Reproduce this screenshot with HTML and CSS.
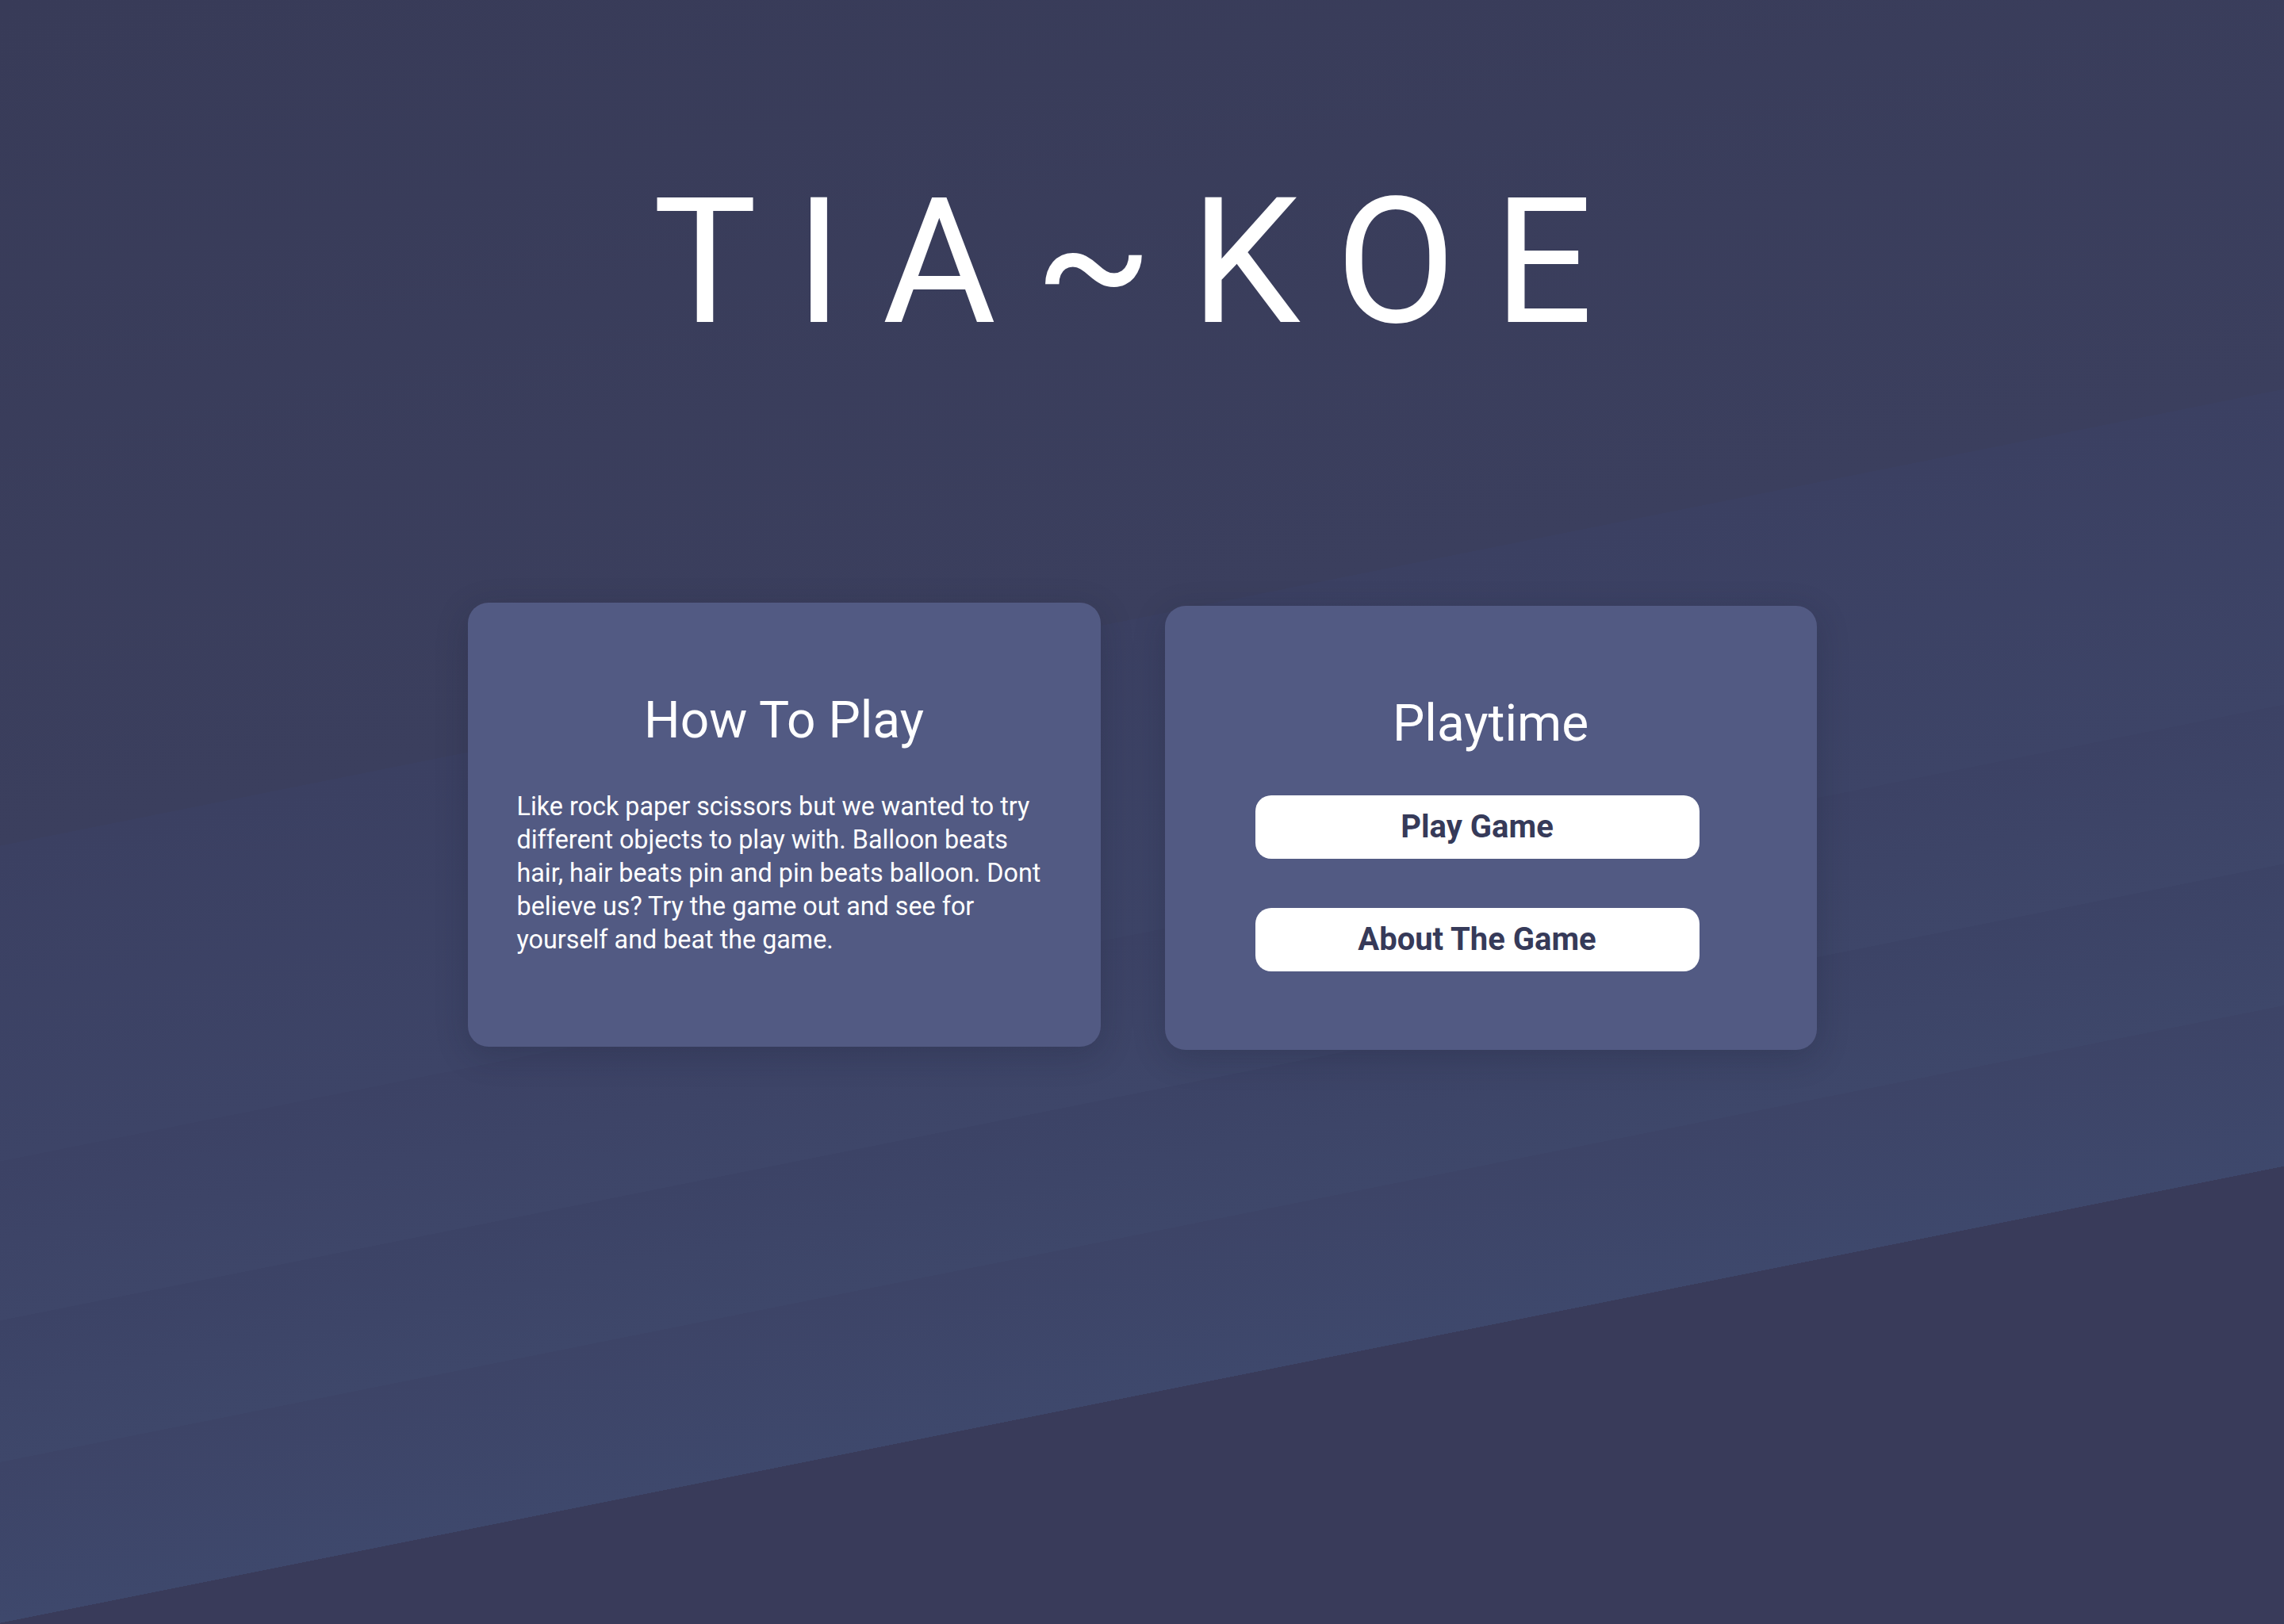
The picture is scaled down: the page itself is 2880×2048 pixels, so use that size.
FILE: index.html
```html
<!DOCTYPE html>
<html lang="en">
<head>
<meta charset="utf-8">
<title>TIA~KOE</title>
<link rel="stylesheet" href="styles.css">
</head>
<body>
<div class="page">
  <header class="masthead">
    <h1 class="logo">TIA~KOE</h1>
  </header>
  <main class="cards">
    <section class="card card-info">
      <h2 class="card-title">How To Play</h2>
      <p class="card-text">Like rock paper scissors but we wanted to try different objects to play with. Balloon beats hair, hair beats pin and pin beats balloon. Dont believe us? Try the game out and see for yourself and beat the game.</p>
    </section>
    <section class="card card-play">
      <h2 class="card-title">Playtime</h2>
      <div class="actions">
        <button class="btn" type="button">Play Game</button>
        <button class="btn" type="button">About The Game</button>
      </div>
    </section>
  </main>
</div>
</body>
</html>
```

FILE: styles.css
```css
* { box-sizing: border-box; }

html, body {
  margin: 0;
  padding: 0;
}

body {
  font-family: Roboto, "Liberation Sans", Arial, sans-serif;
  color: #ffffff;
  background: #393c5a;
}

.page {
  min-height: 100vh;
  width: 100%;
  overflow: hidden;
  background-image: linear-gradient(168.69deg,
    #383b58 0px,
    #3b3f5e 1046px,
    #3b4062 1046px,
    #3d4467 1436px,
    #3c4265 1436px,
    #3e4669 1633px,
    #3c4366 1633px,
    #3e476a 1808px,
    #3d4467 1808px,
    #3e486c 2007px,
    #393b5a 2007px,
    #393b5a 100%);
}

.masthead {
  padding-top: 202px;
  display: flex;
  justify-content: center;
}

.logo {
  margin: 0;
  font-family: Roboto, "Liberation Sans", sans-serif;
  font-weight: 400;
  font-size: 220px;
  line-height: normal;
  letter-spacing: 48px;
  color: #ffffff;
}

.cards {
  margin-top: 300px;
  display: flex;
  justify-content: center;
  align-items: flex-start;
  gap: 81px;
}

.card {
  background: #525a83;
  border-radius: 26px;
  box-shadow: 0 10px 40px rgba(24, 26, 46, 0.22);
  display: flex;
  flex-direction: column;
  align-items: center;
}

.card-info {
  width: 798px;
  height: 560px;
  padding: 111px 62px 0;
}

.card-play {
  width: 822px;
  height: 560px;
  margin-top: 4px;
  padding: 111px 0 0;
}

.card-title {
  margin: 0;
  font-size: 64px;
  font-weight: 400;
  line-height: normal;
  text-align: center;
}

.card-text {
  margin: 50px 0 0;
  font-size: 32.3px;
  line-height: 42px;
  align-self: stretch;
}

.actions {
  margin-top: 53px;
  align-self: stretch;
  padding-left: 114px;
  display: flex;
  flex-direction: column;
  gap: 62px;
}

.btn {
  width: 560px;
  height: 80px;
  border: none;
  border-radius: 20px;
  background: #ffffff;
  color: #363a59;
  font-family: Roboto, "Liberation Sans", sans-serif;
  font-weight: 700;
  font-size: 40px;
  line-height: 80px;
  padding: 0;
  cursor: pointer;
}
```
